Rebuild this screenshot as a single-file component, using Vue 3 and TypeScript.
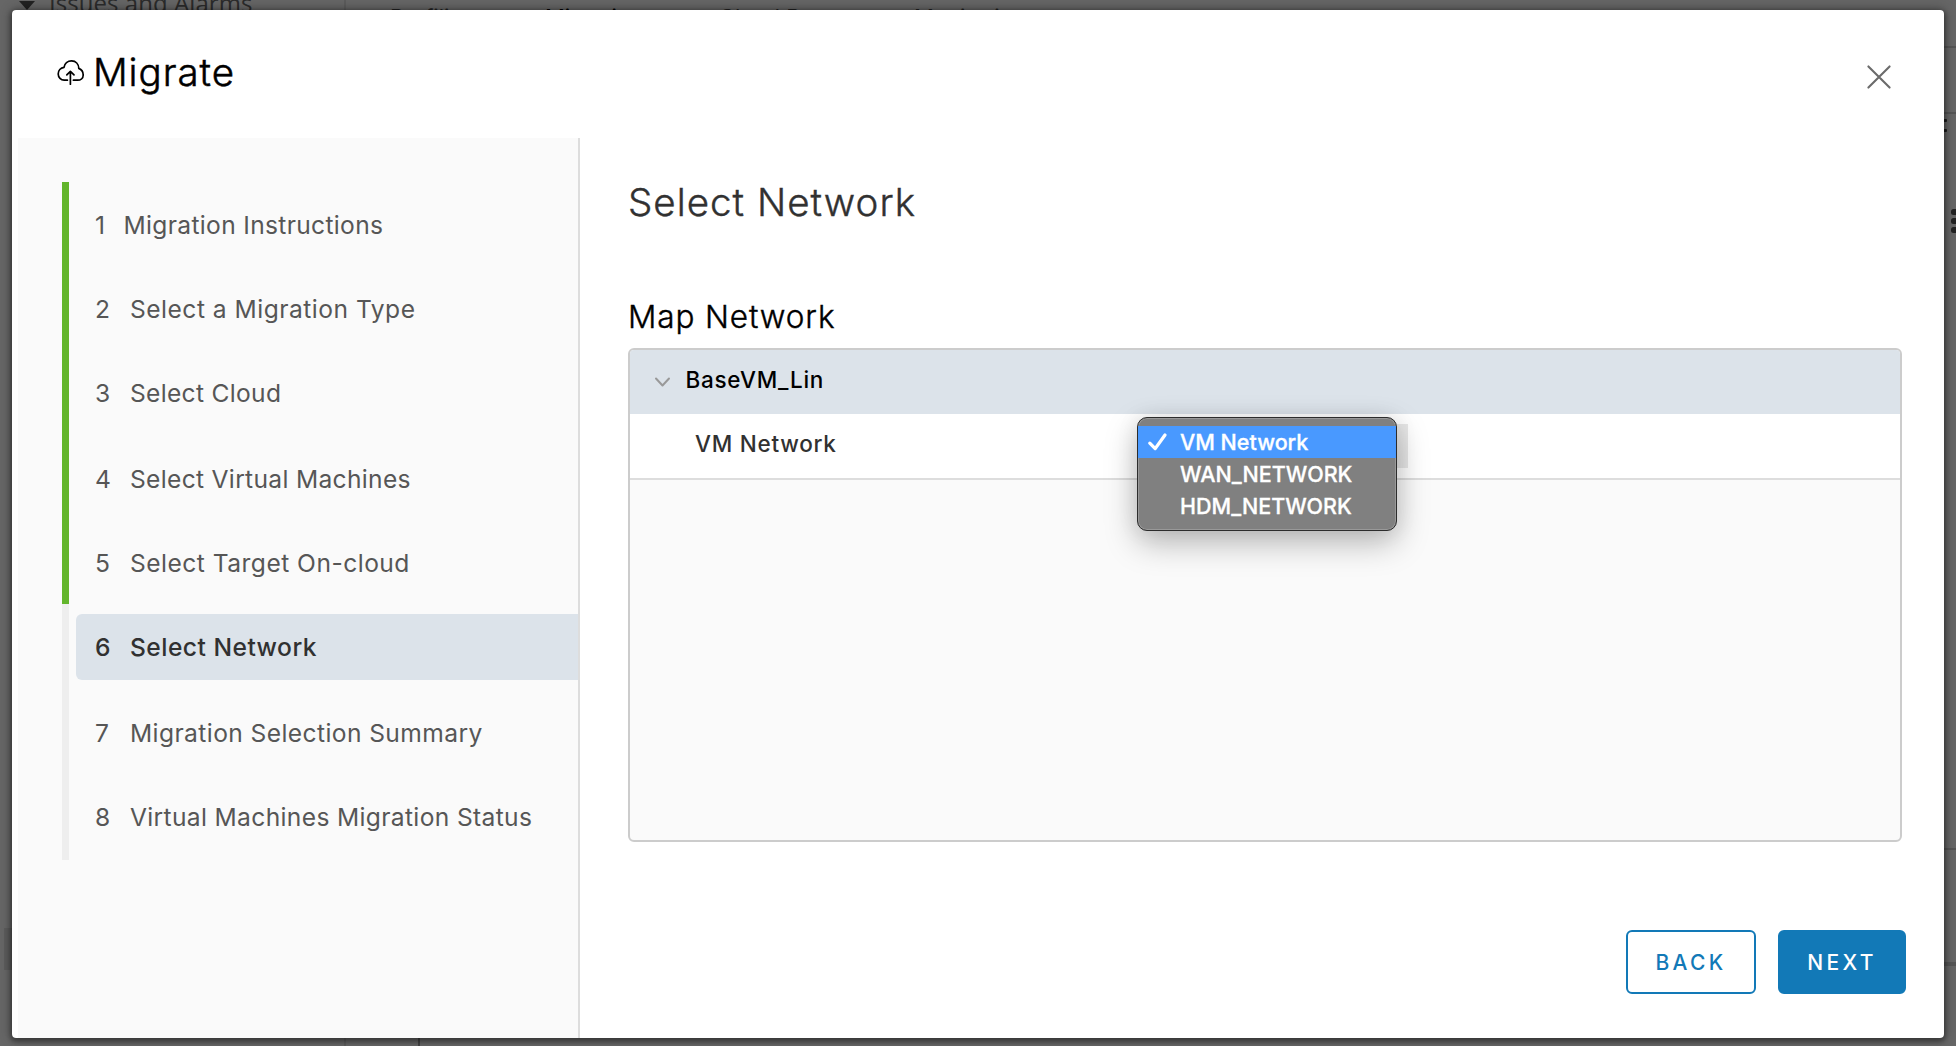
<script setup lang="ts">
interface Step {
  title: string
  spacing: number
}

interface Tab {
  label: string
  left: number
  active?: boolean
}

const steps: Step[] = [
  { title: 'Migration Instructions', spacing: 0.32 },
  { title: 'Select a Migration Type', spacing: 0.49 },
  { title: 'Select Cloud', spacing: 0.3 },
  { title: 'Select Virtual Machines', spacing: 0.31 },
  { title: 'Select Target On-cloud', spacing: 0.47 },
  { title: 'Select Network', spacing: 0.47 },
  { title: 'Migration Selection Summary', spacing: 0.4 },
  { title: 'Virtual Machines Migration Status', spacing: 0.34 },
]
const current = 5

const tabs: Tab[] = [
  { label: 'Profiling', left: 390 },
  { label: 'Migration', left: 545, active: true },
  { label: 'Cloud Burst', left: 719 },
  { label: 'Monitoring', left: 914 },
]

const networks: string[] = ['VM Network', 'WAN_NETWORK', 'HDM_NETWORK']
const selected = 'VM Network'
</script>

<template>
  <div class="screen">
    <div class="page" aria-hidden="true">
      <i class="caret"></i>
      <span class="alarms">Issues and Alarms</span>
      <span
        v-for="tab in tabs"
        :key="tab.label"
        class="tab"
        :class="{ on: tab.active }"
        :style="{ left: tab.left + 'px' }"
      >{{ tab.label }}</span>
      <i class="vline v1"></i>
      <i class="vline v2"></i>
      <i class="vline v3"></i>
      <i class="hline h1"></i>
      <i class="hline h2"></i>
      <i class="hline h3"></i>
      <i class="hline h4"></i>
      <i class="patch"></i>
      <svg class="dots" width="14" height="130" viewBox="0 0 14 130">
        <g fill="#1c1c1c">
          <rect x="0" y="6" width="5" height="3" rx="1" />
          <rect x="0" y="16" width="5" height="3" rx="1" />
        </g>
        <g fill="#222">
          <rect x="9" y="96" width="9" height="6" rx="2.5" />
          <rect x="9" y="105" width="9" height="6" rx="2.5" />
          <rect x="9" y="114" width="9" height="6" rx="2.5" />
        </g>
      </svg>
    </div>

    <section class="modal" role="dialog">
      <header class="head">
        <svg class="cloud" width="30" height="30" viewBox="0 0 30 30" fill="none" stroke="#000" stroke-width="1.7" stroke-linecap="round" stroke-linejoin="round">
          <path d="M11.4 23.2H8.2A6.3 6.3 0 0 1 2.2 17C2.2 13.6 4.6 10.9 8 10.4C8.6 6.6 11.6 3.9 15.6 3.9C19.8 3.9 22.6 7 22.8 11.4C25.6 12.6 27.2 15 27.2 17.9C27.2 21.2 24.6 23.2 21.6 23.2H17.4" />
          <path d="M14.4 27.2V14.6M10.8 17.8L14.4 14.3L18 17.8" />
        </svg>
        <h1>Migrate</h1>
        <svg class="close" width="28" height="28" viewBox="0 0 28 28" stroke="#6b6b6b" stroke-width="2.1" stroke-linecap="round">
          <path d="M3.4 3.4L24.6 24.6M24.6 3.4L3.4 24.6" />
        </svg>
      </header>

      <div class="body">
        <nav class="side">
          <ol class="steps">
            <li
              v-for="(step, i) in steps"
              :key="step.title"
              :class="{ done: i < current, active: i === current }"
            >
              <div class="step">
                <span class="num">{{ i + 1 }}</span>
                <span class="title" :style="{ letterSpacing: step.spacing + 'px' }">{{ step.title }}</span>
              </div>
            </li>
          </ol>
        </nav>

        <main class="content">
          <h2>Select Network</h2>
          <h3>Map Network</h3>
          <div class="grid">
            <div class="group">
              <svg width="20" height="14" viewBox="0 0 20 14" fill="none" stroke="#999" stroke-width="2" stroke-linecap="round" stroke-linejoin="round">
                <path d="M3 3.5L9.5 10.5L16 3.5" />
              </svg>
              <span>BaseVM_Lin</span>
            </div>
            <div class="row">
              <span class="net">VM Network</span>
              <div class="select">
                <ul class="menu">
                  <li v-for="n in networks" :key="n" :class="{ on: n === selected }">
                    <svg v-if="n === selected" width="22" height="20" viewBox="0 0 22 20" fill="none" stroke="#fff" stroke-width="3.3" stroke-linecap="round" stroke-linejoin="round">
                      <path d="M2.8 11.2L8.2 16.6L18 3" />
                    </svg>
                    <span>{{ n }}</span>
                  </li>
                </ul>
              </div>
            </div>
          </div>
          <footer class="actions">
            <button class="btn">BACK</button>
            <button class="btn primary">NEXT</button>
          </footer>
        </main>
      </div>
    </section>
  </div>
</template>

<style>
body {
  margin: 0;
}
</style>

<style scoped>
.screen {
  position: relative;
  box-sizing: border-box;
  width: 1956px;
  height: 1046px;
  padding: 10px 12px 8px;
  overflow: hidden;
  background: #666;
  font-family: Inter, "Liberation Sans", sans-serif;
}
.page {
  position: absolute;
  inset: 0;
}
.page > * {
  position: absolute;
}
.caret {
  left: 19px;
  top: 1px;
  border: 8px solid transparent;
  border-top: 9px solid #222;
  border-bottom: 0;
}
.alarms {
  left: 49px;
  top: -11px;
  font: 24px/28px "Open Sans", sans-serif;
  letter-spacing: 0.06px;
  color: #2b2b2b;
  white-space: nowrap;
}
.tab {
  top: 3px;
  font-size: 22px;
  line-height: 28px;
  color: #222;
  white-space: nowrap;
}
.tab.on {
  color: #000;
}
.vline {
  width: 2px;
  background: #5c5c5c;
}
.v1 { left: 344px; top: 0; height: 10px; }
.v2 { left: 344px; top: 1038px; height: 8px; }
.v3 { left: 418px; top: 1038px; height: 8px; background: #444; }
.hline {
  left: 1944px;
  width: 12px;
  height: 2px;
  background: #555;
}
.h1 { top: 46px; }
.h2 { top: 112px; }
.h3 { top: 848px; }
.h4 { top: 962px; height: 4px; }
.patch {
  left: 4px;
  top: 928px;
  width: 10px;
  height: 42px;
  background: #5c5c5c;
}
.dots {
  left: 1942px;
  top: 113px;
}

.modal {
  position: relative;
  box-sizing: border-box;
  display: flex;
  flex-direction: column;
  height: 1028px;
  padding-left: 6px;
  border-radius: 4px;
  overflow: hidden;
  background: #fff;
}
.screen::after {
  content: "";
  position: absolute;
  inset: 10px 12px 8px;
  border-radius: 4px;
  box-shadow: 0 2px 4px 2px rgba(0, 0, 0, 0.3), 0 0 12px 1px rgba(0, 0, 0, 0.3);
  pointer-events: none;
}
.head {
  display: flex;
  height: 128px;
}
.cloud {
  margin: 47px 0 0 38px;
}
h1, h2, h3 {
  margin: 0;
  font-weight: 300;
}
h1 {
  margin: 38px 0 0 7px;
  font-size: 38.5px;
  line-height: 48px;
  letter-spacing: 0.95px;
  color: #000;
  -webkit-text-stroke: 0.5px #000;
}
.close {
  margin: 53px 51px 0 auto;
}
.body {
  display: flex;
  flex: 1;
}
.side {
  box-sizing: border-box;
  width: 562px;
  padding: 44px 0 0 44px;
  border-right: 2px solid #ddd;
  background: #fafafa;
}
.steps {
  margin: 0;
  padding: 0;
  list-style: none;
}
.steps li {
  box-sizing: border-box;
  height: 84px;
  padding: 10px 0 0 7px;
  border-left: 7px solid #eee;
}
.steps li:nth-child(3n),
.steps li:last-child {
  height: 86px;
}
.steps li.done {
  border-left-color: #62b52b;
}
.step {
  display: flex;
  height: 66px;
  padding-left: 19px;
  font-size: 24.6px;
  line-height: 66px;
  color: #565656;
  white-space: nowrap;
}
.num {
  width: 35px;
}
.steps li:first-child .num {
  width: 28.5px;
}
.active .step {
  border-radius: 6px 0 0 6px;
  background: #dce3ea;
  color: #313131;
  font-weight: 500;
}
.content {
  flex: 1;
  padding: 38px 42px 0 48px;
}
h2 {
  height: 52px;
  font-size: 38.5px;
  line-height: 52px;
  letter-spacing: 1.03px;
  color: #313131;
  -webkit-text-stroke: 0.4px #313131;
}
h3 {
  height: 40px;
  margin-top: 69px;
  font-size: 31.5px;
  line-height: 40px;
  letter-spacing: 0.88px;
  color: #000;
  -webkit-text-stroke: 0.4px #000;
}
.grid {
  box-sizing: border-box;
  height: 494px;
  margin-top: 11px;
  border: 2px solid #ccc;
  border-radius: 6px;
  background: #fafafa;
}
.group {
  display: flex;
  height: 64px;
  padding-left: 22px;
  border-radius: 4px 4px 0 0;
  background: #dce3ea;
  font-size: 22.5px;
  font-weight: 500;
  line-height: 60px;
  letter-spacing: 0.72px;
  color: #000;
}
.group svg {
  margin: 25px 12.5px 0 1px;
}
.row {
  display: flex;
  height: 64px;
  border-bottom: 2px solid #ddd;
  background: #fff;
  font-size: 22.5px;
  font-weight: 500;
  line-height: 60px;
  letter-spacing: 0.74px;
  color: #313131;
}
.net {
  width: 443px;
  padding-left: 65px;
}
.select {
  position: relative;
  width: 270px;
  height: 44px;
  margin-top: 10px;
  background: #e8e8e8;
}
.menu {
  position: absolute;
  left: -1px;
  top: -7px;
  box-sizing: border-box;
  width: 260px;
  height: 114px;
  margin: 0;
  padding: 8px 0 0;
  border: 1px solid #2c2c2c;
  border-radius: 10px;
  background: #808080;
  box-shadow: inset 0 0 0 1px #999, 0 12px 32px rgba(0, 0, 0, 0.27), 0 0 22px rgba(0, 0, 0, 0.08);
  list-style: none;
  color: #fff;
  font-size: 21.5px;
  line-height: 32px;
  letter-spacing: 0;
  -webkit-text-stroke: 0.3px #fff;
}
.menu li {
  position: relative;
  height: 32px;
  padding-left: 42px;
}
.menu li.on {
  background: #4999ff;
}
.menu svg {
  position: absolute;
  left: 9px;
  top: 6px;
}
.actions {
  display: flex;
  justify-content: flex-end;
  gap: 22px;
  margin: 88px -4px 0 0;
}
.btn {
  box-sizing: border-box;
  width: 130px;
  height: 64px;
  padding: 2px 0 0;
  border: 2px solid #1279b7;
  border-radius: 6px;
  background: #fff;
  color: #1279b7;
  font: 500 21px/58px Inter, "Liberation Sans", sans-serif;
  letter-spacing: 3.3px;
}
.btn.primary {
  width: 128px;
  background: #1279b7;
  color: #fff;
}
</style>
